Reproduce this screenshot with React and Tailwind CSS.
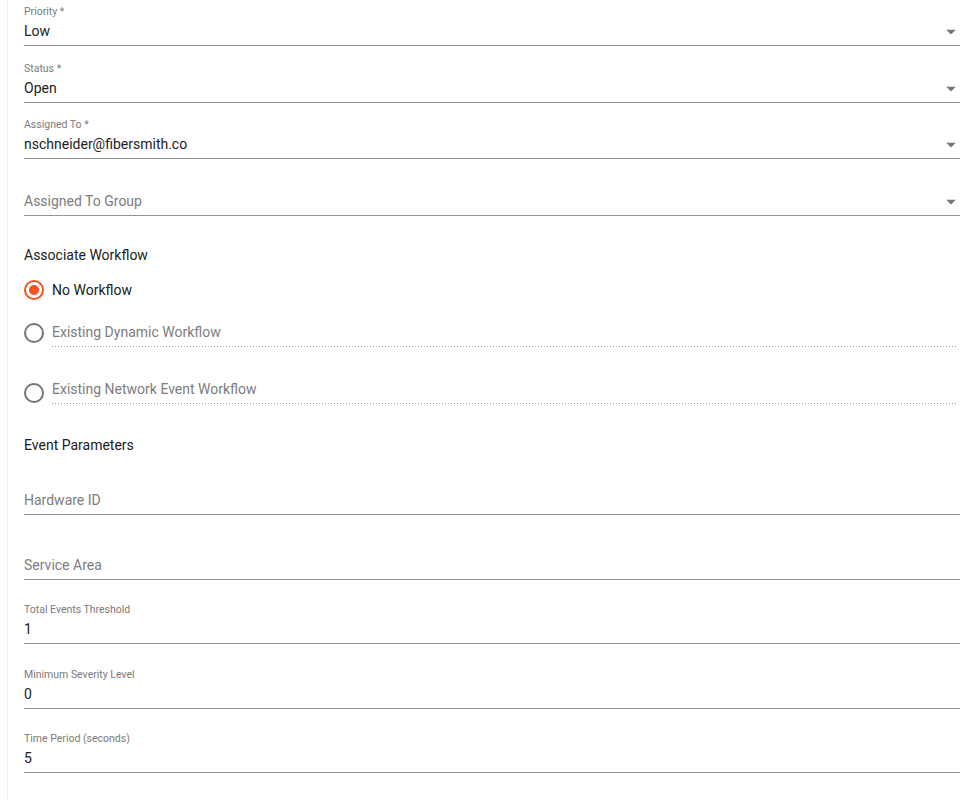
import React, { useState } from 'react';

const ArrowDrop = () => (
  <svg className="absolute right-[4px] top-1/2 -translate-y-1/2 w-[10px] h-[5px] mt-[1px]" viewBox="0 0 10 5">
    <path d="M0 0l5 5 5-5z" fill="#757575" />
  </svg>
);

const Field = ({ label, value, placeholder, select, pad }) => (
  <div className={`flex flex-col ${pad}`}>
    <div className="mt-[1px] h-[14px] text-[10.5px] leading-[14px] text-[#7b7b7b]">{label}</div>
    <div className="relative h-[24px] text-[14px] leading-[24px]">
      {value ? (
        <span className="text-[#212121]">{value}</span>
      ) : (
        <span className="text-[#7d7d7d]">{placeholder}</span>
      )}
      {select && <ArrowDrop />}
    </div>
    <div className="h-[2px]" />
    <div className="h-[1px] bg-[#949494]" />
  </div>
);

const RadioIcon = ({ checked }) => (
  <svg className="w-[20px] h-[20px] shrink-0" viewBox="0 0 20 20">
    <circle cx="10" cy="10" r="9" fill="none" stroke={checked ? '#f4511e' : '#757575'} strokeWidth="2" />
    {checked && <circle cx="10" cy="10" r="5" fill="#f4511e" />}
  </svg>
);

const dotted = 'h-[1px] bg-[linear-gradient(to_right,#9e9e9e_1px,transparent_1px)] bg-[length:3px_1px]';

export default function App() {
  const [workflow, setWorkflow] = useState('none');

  return (
    <div className="min-h-[800px] bg-white font-['Roboto','Liberation_Sans',sans-serif]">
      <div className="ml-[7px] min-h-[800px] border-l border-[#eeeeee] pl-[16px] pr-[15px]">
        <Field label="Priority *" value="Low" select pad="pt-[4px]" />
        <Field label="Status *" value="Open" select pad="pt-[15px]" />
        <Field label="Assigned To *" value="nschneider@fibersmith.co" select pad="pt-[14px]" />
        <Field label="" placeholder="Assigned To Group" select pad="pt-[15px]" />

        <div className="mt-[29px] h-[20px] text-[14px] leading-[20px] text-[#212121]">Associate Workflow</div>

        <div
          className="mt-[13px] flex h-[24px] cursor-pointer items-center gap-[8px]"
          onClick={() => setWorkflow('none')}
        >
          <RadioIcon checked={workflow === 'none'} />
          <span className="text-[14px] text-[#212121]">No Workflow</span>
        </div>

        <div className="mt-[20px] flex items-start gap-[8px]" onClick={() => setWorkflow('dynamic')}>
          <div className="mt-[1px]">
            <RadioIcon checked={workflow === 'dynamic'} />
          </div>
          <div className="flex-1 pr-[3px]">
            <div className="h-[20px] text-[14px] leading-[20px] text-[#7d7d7d]">Existing Dynamic Workflow</div>
            <div className={`mt-[4px] ${dotted}`} />
          </div>
        </div>

        <div className="mt-[32px] flex items-start gap-[8px]" onClick={() => setWorkflow('network')}>
          <div className="mt-[4px]">
            <RadioIcon checked={workflow === 'network'} />
          </div>
          <div className="flex-1 pr-[3px]">
            <div className="h-[20px] text-[14px] leading-[20px] text-[#7d7d7d]">Existing Network Event Workflow</div>
            <div className={`mt-[4px] ${dotted}`} />
          </div>
        </div>

        <div className="mt-[31px] h-[20px] text-[14px] leading-[20px] text-[#212121]">Event Parameters</div>

        <Field label="" placeholder="Hardware ID" pad="pt-[18px]" />
        <Field label="" placeholder="Service Area" pad="pt-[23px]" />
        <Field label="Total Events Threshold" value="1" pad="pt-[22px]" />
        <Field label="Minimum Severity Level" value="0" pad="pt-[23px]" />
        <Field label="Time Period (seconds)" value="5" pad="pt-[22px]" />
      </div>
    </div>
  );
}
